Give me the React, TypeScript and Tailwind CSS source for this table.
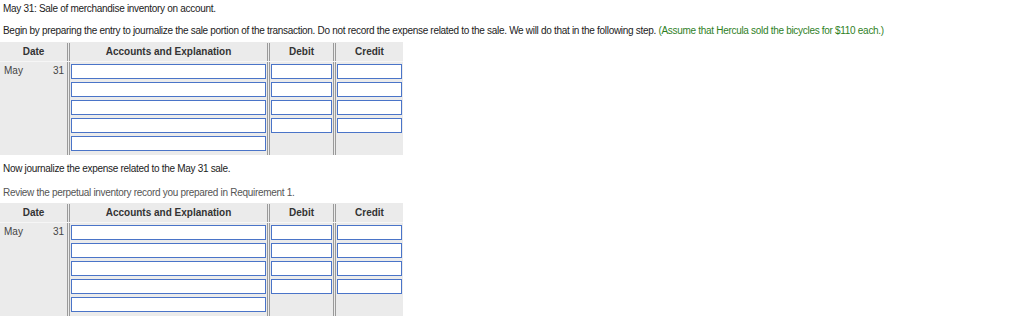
import React from "react";

const GRID = "grid grid-cols-[67px_200px_66px_70px]";
const SEP = "border-l-[3px] border-double border-[#9a9a9a]";

function Field() {
    return <div className="h-[15px] w-full border border-[#4a74c8] bg-white" />;
}

function JournalTable() {
    const rows = [0, 1, 2, 3, 4];
    return (
        <div className="w-[403px] bg-[#ebebeb] tracking-normal">
            <div className={`${GRID} h-[20px] border-b border-[#f6f6f6] pt-[1px] font-bold text-[#333]`}>
                <div className="flex items-center justify-center">Date</div>
                <div className={`${SEP} flex items-center justify-center`}>Accounts and Explanation</div>
                <div className={`${SEP} flex items-center justify-center`}>Debit</div>
                <div className={`${SEP} flex items-center justify-center`}>Credit</div>
            </div>
            {rows.map((i) => (
                <div key={i} className={`${GRID} h-[18.2px]`}>
                    <div className="flex items-center justify-between pl-[4px] pr-[3px] text-[#444]">
                        {i === 0 && (
                            <>
                                <span>May</span>
                                <span>31</span>
                            </>
                        )}
                    </div>
                    <div className={`${SEP} flex items-center px-[1px]`}>
                        <Field />
                    </div>
                    <div className={`${SEP} flex items-center px-[1px]`}>{i < 4 && <Field />}</div>
                    <div className={`${SEP} flex items-center px-[1px]`}>{i < 4 && <Field />}</div>
                </div>
            ))}
            <div className={`${GRID} h-[2px]`}>
                <div />
                <div className={SEP} />
                <div className={SEP} />
                <div className={SEP} />
            </div>
        </div>
    );
}

export default function App() {
    return (
        <div className="h-[328px] w-[1024px] bg-white font-['Liberation_Sans',Arial,sans-serif] text-[10px] leading-[14px] tracking-[-0.3px] text-[#222]">
            <p className="pl-[3px] pt-[2px]">May 31: Sale of merchandise inventory on account.</p>
            <p className="mt-[8px] pl-[3px]">
                Begin by preparing the entry to journalize the sale portion of the transaction. Do not record the expense related to the sale. We will do that in the following step.{" "}
                <span className="text-[#2f7f1f]">(Assume that Hercula sold the bicycles for $110 each.)</span>
            </p>
            <div className="mt-[4px]">
                <JournalTable />
            </div>
            <p className="mt-[7px] pl-[3px]">Now journalize the expense related to the May 31 sale.</p>
            <p className="mt-[10px] pl-[3px] text-[#555]">Review the perpetual inventory record you prepared in Requirement 1.</p>
            <div className="mt-[3px]">
                <JournalTable />
            </div>
        </div>
    );
}
